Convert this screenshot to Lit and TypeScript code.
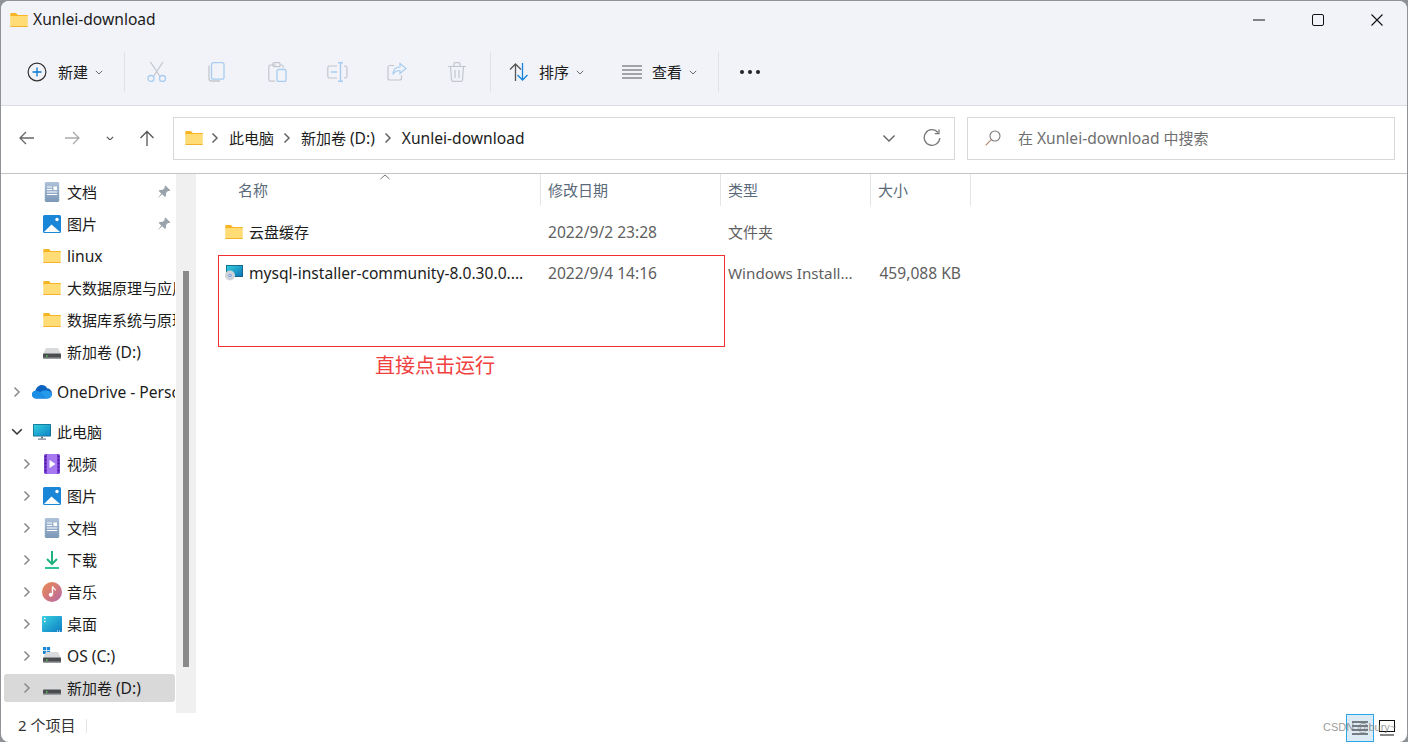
import { LitElement, html, css, svg } from "lit";
import { customElement } from "lit/decorators.js";

const folder = (w = 18) => html`<svg width=${w} height=${Math.round(w * 0.8)} viewBox="0 0 18 14.4"><path d="M0 1.2C0 .5.5 0 1.2 0h4.6l2 2H18v2H0z" fill="#f9b425"/><path d="M0 3h18v10.4c0 .6-.4 1-1 1H1c-.6 0-1-.4-1-1z" fill="#ffdc75"/><path d="M0 13.4h18v.2c0 .5-.4.8-1 .8H1c-.6 0-1-.3-1-.8z" fill="#f2b12f"/></svg>`;
const chev = (c = "#8a8a8a") => html`<svg width="8" height="12" viewBox="0 0 8 12"><path d="M1.5 1.5 6 6l-4.5 4.5" fill="none" stroke=${c} stroke-width="1.5"/></svg>`;
const chevDown = (w = 10, c = "#5c5c5c", sw = 1.1) => html`<svg width=${w} height=${w * 0.6} viewBox="0 0 10 6"><path d="M1 1l4 4 4-4" fill="none" stroke=${c} stroke-width=${sw}/></svg>`;
const docIcon = html`<svg width="16" height="20" viewBox="0 0 16 20"><defs><linearGradient id="dg" x1="0" y1="0" x2="0" y2="1"><stop offset="0" stop-color="#adc2d8"/><stop offset="1" stop-color="#7c98b8"/></linearGradient></defs><rect x=".8" y="0" width="14.4" height="20" rx="1.6" fill="url(#dg)"/><path d="M3 5h5M3 7.500h5M3 10h10M3 12.500h10" stroke="#fff" stroke-width="1"/><rect x="9.500" y="4.500" width="3.500" height="3.500" fill="#fff"/></svg>`;
const picIcon = html`<svg width="18" height="18" viewBox="0 0 18 18"><rect width="18" height="18" rx="1.500" fill="#1a86d8"/><circle cx="14" cy="4.500" r="1.700" fill="#fff"/><path d="M1 17l7.500-7.500L17 17z" fill="#fff"/></svg>`;
const drive = (win = false) => html`<svg width="18" height="18" viewBox="0 0 18 18">${win ? svg`<path d="M0 0h3.200v3.200H0zM3.900 0h3.200v3.200H3.900zM0 3.900h3.200v3.200H0zM3.900 3.900h3.200v3.200H3.900z" fill="#1a86d8"/>` : ""}<path d="M3 5h12l3 6H0z" fill="#d8dadc"/><rect y="10.500" width="18" height="5" rx=".8" fill="#4a4d50"/><rect y="14.500" width="18" height="1.500" fill="#9a9c9e"/><rect x="3" y="12.300" width="1.500" height="1.300" fill="#55e05a"/></svg>`;
const pin = html`<svg width="14" height="14" viewBox="0 0 14 14"><path d="M8.500.5l5 5-1.300.6-1.300-.2-2 2.400.2 2.400-1.200 1.200-2.600-2.700L1 13 .9 12.900l3.400-4.300L1.700 6l1.200-1.200 2.400.2 2.400-2-.2-1.300z" fill="#9aa3ab"/></svg>`;
const cloud = html`<svg width="20" height="14" viewBox="0 0 20 14"><path d="M4.500 13.500C1.500 13.500 0 11.500 0 9.500c0-2 1.500-3.600 3.400-3.800C4.200 2.500 6.800 0 9.800 0c2.300 0 4.200 1.200 5.300 3.200 2.700.2 4.900 2.500 4.900 5.300 0 2.800-2.200 5-5 5z" fill="#0c64c0"/><path d="M4.500 13.500C1.500 13.500 0 11.500 0 9.500c0-2.200 2-4 4.500-3.700 1.500 0 2.800.8 3.800 1.800l6.500 5.900z" fill="#1b8fe6"/><path d="M8 7.500c1.500-1.500 3.500-2.300 5-1.800 1-.3 2-.3 3 0 2.400.5 4 2 4 4 0 2.300-2.200 3.800-4.500 3.800H14.800z" fill="#2a9ff0" opacity=".9"/></svg>`;
const pc = html`<svg width="18" height="16" viewBox="0 0 18 16"><defs><linearGradient id="pg" x1="0" y1="0" x2="1" y2="1"><stop offset="0" stop-color="#32cfdc"/><stop offset="1" stop-color="#0d84c8"/></linearGradient></defs><rect width="18" height="12.500" rx=".8" fill="#0f6d8e"/><rect x=".8" y=".8" width="16.400" height="10.900" fill="url(#pg)"/><rect x="8" y="12.500" width="2" height="2" fill="#6d7d88"/><rect x="5" y="14.500" width="8" height="1.200" fill="#6d7d88"/></svg>`;
const video = html`<svg width="16" height="20" viewBox="0 0 16 20"><rect width="16" height="20" rx="1.800" fill="#7a3dd8"/><rect x="3" width="10" height="20" fill="#a779f0"/><path d="M5.500 6l6 4-6 4z" fill="#fff"/><path d="M.8 2.500h1.400M.8 6h1.400M.8 9.500h1.400M.8 13h1.400M.8 16.500h1.400M13.800 2.500h1.400M13.800 6h1.400M13.800 9.500h1.400M13.800 13h1.400M13.800 16.500h1.400" stroke="#3e1a80" stroke-width="1.500"/></svg>`;
const dl = html`<svg width="14" height="18" viewBox="0 0 14 18"><path d="M7 0v12.500M2 8l5 5 5-5" fill="none" stroke="#21b07e" stroke-width="2"/><rect y="16" width="14" height="2" fill="#2fc19a"/></svg>`;
const music = html`<svg width="20" height="20" viewBox="0 0 20 20"><defs><linearGradient id="mg" x1="0" y1="0" x2="1" y2="1"><stop offset="0" stop-color="#ee8a4e"/><stop offset="1" stop-color="#b568a8"/></linearGradient></defs><circle cx="10" cy="10" r="10" fill="url(#mg)"/><path d="M10.500 4.500v7.800" stroke="#fff" stroke-width="1.400"/><path d="M10.500 4.500c.5 2 3 2 3 4" fill="none" stroke="#fff" stroke-width="1.200"/><circle cx="8.800" cy="12.800" r="2" fill="#fff"/></svg>`;
const desk = html`<svg width="20" height="16" viewBox="0 0 20 16"><defs><linearGradient id="kg" x1="0" y1="0" x2="1" y2="1"><stop offset="0" stop-color="#38d0e0"/><stop offset="1" stop-color="#0d7cc4"/></linearGradient></defs><rect width="20" height="16" rx="1" fill="url(#kg)"/><path d="M2 2.500h1.500M2 5.500h1.500" stroke="#fff" stroke-width="1.500"/><path d="M15 15h1M17 15h1" stroke="#fff"/></svg>`;

const installer = html`<svg width="18" height="16" viewBox="0 0 18 16"><defs><linearGradient id="ig" x1="0" y1="0" x2="1" y2="1"><stop offset="0" stop-color="#32cfdc"/><stop offset="1" stop-color="#0d74b8"/></linearGradient></defs><rect x="1" y="0" width="17" height="12" fill="#0f5f80"/><rect x="1.800" y=".8" width="15.400" height="10.400" fill="url(#ig)"/><circle cx="5" cy="10.500" r="5" fill="#d0d4d9"/><circle cx="5" cy="10.500" r="1.800" fill="#7fa8e0"/><circle cx="5" cy="10.500" r=".6" fill="#fff"/></svg>`;

const L = (s: string) => html`<span class="l">${s}</span>`;

type Row = { t: unknown; i: unknown; lvl: number; c?: "r" | "d"; pin?: boolean; sel?: boolean; gap?: boolean };
const dDrive = html`新加卷 ${L("(D:)")}`;
const rows: Row[] = [
  { t: "文档", i: docIcon, lvl: 1, pin: true },
  { t: "图片", i: picIcon, lvl: 1, pin: true },
  { t: L("linux"), i: folder(), lvl: 1 },
  { t: "大数据原理与应用", i: folder(), lvl: 1 },
  { t: "数据库系统与原理", i: folder(), lvl: 1 },
  { t: dDrive, i: drive(), lvl: 1 },
  { t: L("OneDrive - Personal"), i: cloud, lvl: 0, c: "r", gap: true },
  { t: "此电脑", i: pc, lvl: 0, c: "d", gap: true },
  { t: "视频", i: video, lvl: 1, c: "r" },
  { t: "图片", i: picIcon, lvl: 1, c: "r" },
  { t: "文档", i: docIcon, lvl: 1, c: "r" },
  { t: "下载", i: dl, lvl: 1, c: "r" },
  { t: "音乐", i: music, lvl: 1, c: "r" },
  { t: "桌面", i: desk, lvl: 1, c: "r" },
  { t: L("OS (C:)"), i: drive(true), lvl: 1, c: "r" },
  { t: dDrive, i: drive(), lvl: 1, c: "r", sel: true },
];

const tools = [
  html`<svg width="20" height="20" viewBox="0 0 20 20" fill="none"><path d="M3.500 0l9.500 14.500M16 0L6.500 14.500" stroke="#c3c6cc" stroke-width="1.200"/><circle cx="4" cy="16.500" r="3" stroke="#a8cdf0" stroke-width="1.300"/><circle cx="15.500" cy="16.500" r="3" stroke="#a8cdf0" stroke-width="1.300"/></svg>`,
  html`<svg width="18" height="20" viewBox="0 0 18 20" fill="none"><path d="M1 3.500v13c0 1.500 1 2.500 2.500 2.500H12" stroke="#c3c6cc" stroke-width="1.300"/><rect x="3.500" y=".7" width="12.500" height="16.500" rx="2" stroke="#a8cdf0" stroke-width="1.300"/></svg>`,
  html`<svg width="19" height="20" viewBox="0 0 19 20" fill="none"><path d="M8 3H2.500C1.500 3 .8 3.700.8 4.700v12.800c0 1 .7 1.700 1.700 1.700H7M12 3h1.500c1 0 1.700.7 1.700 1.700V6" stroke="#c3c6cc" stroke-width="1.200"/><rect x="5" y=".7" width="7" height="4" rx="1" stroke="#c3c6cc" stroke-width="1.200"/><rect x="9" y="7.500" width="9" height="12" rx="1.500" stroke="#a8cdf0" stroke-width="1.300"/></svg>`,
  html`<svg width="21" height="20" viewBox="0 0 21 20" fill="none"><path d="M10 4H2.500C1.500 4 .8 4.700.8 5.700v8.600c0 1 .7 1.700 1.700 1.700H10M17 4h1.300c1 0 1.700.7 1.700 1.700v8.600c0 1-.7 1.700-1.700 1.700H17" stroke="#c3c6cc" stroke-width="1.200"/><path d="M13.500.7v18.600M11 .7h5M11 19.300h5M4 10h6" stroke="#a8cdf0" stroke-width="1.400"/></svg>`,
  html`<svg width="20" height="20" viewBox="0 0 20 20" fill="none"><path d="M7 3.500H3C1.800 3.500 1 4.300 1 5.500V16c0 1.200.8 2 2 2h9.500c1.200 0 2-.8 2-2v-2.500" stroke="#c3c6cc" stroke-width="1.200"/><path d="M13 1.500l6 5-6 5V8.500c-3.500 0-5.500 1-7 4 0-5 2.500-7.500 7-7.500z" stroke="#a8cdf0" stroke-width="1.200"/></svg>`,
  html`<svg width="18" height="20" viewBox="0 0 18 20" fill="none" stroke="#c3c6cc" stroke-width="1.200"><path d="M0 4.500h18M6 4.500V2c0-.8.6-1.300 1.300-1.300h3.400c.7 0 1.300.5 1.300 1.300v2.500M2.500 4.500l1 13.500c.1.800.6 1.300 1.300 1.300h8.400c.7 0 1.200-.5 1.300-1.300l1-13.500M7 8v8M11 8v8"/></svg>`,
];

@customElement("app-root")
export class AppRoot extends LitElement {
  static styles = css`
    :host { display: block; width: 1408px; height: 742px; background: #8f9296; overflow: hidden; position: relative;
      font-family: "Noto Sans", "Noto Sans CJK SC", sans-serif; font-size: 15px; color: #1c1c1c; }
    .l { font-size: 15.6px; }
    .l2 { font-size: 15.2px; }
    .win { margin: 1px 1px 0 1px; height: 741px; border-radius: 8px; overflow: hidden; background: #fff; display: flex; flex-direction: column; position: relative; }
    .title { height: 38px; background: #f1f3f9; display: flex; align-items: center; padding-left: 9px; padding-right: 1px; flex: none; }
    .title .name { margin-left: 5px; flex: 1; line-height: 36px; height: 38px; }
    .wb { width: 59px; height: 36px; display: flex; align-items: center; justify-content: center; }
    .toolbar { height: 66px; background: #f1f3f9; border-bottom: 1px solid #dcdee3; display: flex; align-items: center; flex: none; padding-left: 26px; }
    .sep { width: 1px; height: 40px; background: #e0e2e7; flex: none; }
    .tbtn { display: flex; align-items: center; flex: none; }
    .tbtn .lbl { margin-left: 10px; margin-right: 7px; line-height: 18px; }
    .new { width: 97px; }
    .new .lbl { margin-left: 11px; margin-right: 7px; }
    .tool { width: 60px; height: 40px; display: flex; align-items: center; justify-content: center; flex: none; }
    .tools { display: flex; margin-left: 2px; margin-right: 3px; }
    .sort { margin-left: 18px; width: 113px; }
    .view { width: 96px; }
    .more { margin-left: 21px; display: flex; gap: 4px; }
    .more i { width: 4px; height: 4px; border-radius: 50%; background: #222; display: block; }
    .addr { height: 68px; display: flex; align-items: center; flex: none; border-bottom: 1px solid #c4c4c4; box-sizing: border-box; padding-bottom: 3px; }
    .nav { width: 172px; display: flex; align-items: center; flex: none; height: 20px; }
    .nav span { display: flex; justify-content: center; align-items: center; flex: none; }
    .box { height: 43px; border: 1px solid #d8d8d8; box-sizing: border-box; display: flex; align-items: center; background: #fff; flex: none; }
    .box > span { line-height: 20px; margin-top: -1px; }
    .path { width: 782px; padding-left: 11px; }
    .crumb { margin-left: 9px; margin-right: 10px; display: flex; margin-top: 0 !important; }
    .crumb.first { margin-left: 8px; }
    .spacer { flex: 1; }
    .search { width: 428px; margin-left: 12px; padding-left: 17px; color: #6f6f6f; }
    .search .txt { margin-left: 17px; }
    .main { flex: 1; display: flex; min-height: 0; }
    .side { width: 174px; overflow: hidden; flex: none; padding-top: 2px; display: flex; flex-direction: column; white-space: nowrap; }
    .row { height: 28px; margin: 2px 0 2px 3px; flex: none; display: flex; align-items: center; border-radius: 3px; padding-right: 4px; }
    .row.sel { background: #d9d9d9; }
    .row.gap { margin-top: 10px; }
    .cjk { padding-bottom: 2px; }
    .ch { width: 18px; display: flex; justify-content: center; align-items: center; flex: none; }
    .ic { width: 20px; margin-left: 6px; margin-right: 5px; display: flex; justify-content: center; align-items: center; flex: none; }
    .pin { margin-left: auto; display: flex; }
    .gutter { width: 20px; height: 100%; background: #f0f0f0; flex: none; margin-left: 1px; padding: 97px 7px 0; box-sizing: border-box; }
    .thumb { width: 6px; height: 396px; background: #8a8a8a; }
    .content { flex: 1; position: relative; }
    .hdr { display: flex; height: 32px; align-items: center; color: #5a6a7a; }
    .hc { box-sizing: border-box; height: 32px; display: flex; align-items: center; border-right: 1px solid #e5e5e5; padding-left: 7px; padding-bottom: 2px; flex: none; }
    .c1 { width: 345px; }
    .c2 { width: 180px; }
    .c3 { width: 150px; }
    .c4 { width: 100px; }
    .hc.c1 { padding-left: 42px; }
    .list { padding-top: 6px; }
    .fr { display: flex; height: 41px; box-sizing: border-box; padding-bottom: 2px; align-items: center; color: #5f5f5f; }
    .fc { box-sizing: border-box; padding-left: 7px; flex: none; white-space: nowrap; }
    .fc.c1 { padding-left: 28px; display: flex; align-items: center; color: #1c1c1c; }
    .fc.c1 .fi { width: 20px; margin-right: 5px; display: flex; justify-content: center; }
    .fc.c4 { text-align: right; padding-right: 10px; padding-left: 0; }
    .caret { position: absolute; left: 184px; top: 0; }
    .status { height: 29px; flex: none; display: flex; align-items: center; padding-left: 17px; color: #333; position: relative; }
    .status .n { padding-bottom: 6px; }
    .status .s { width: 1px; height: 14px; background: #e5e5e5; margin-left: 11px; margin-bottom: 3px; }
    .vw { margin-left: auto; display: flex; align-items: center; margin-right: 12px; gap: 5px; }
    .vb { width: 28px; height: 28px; box-sizing: border-box; border: 1px solid #2aa7e6; background: #dceaf4; display: flex; align-items: center; justify-content: center; }
    .vb2 { width: 16px; height: 16px; display: flex; }
    .redbox { position: absolute; left: 217px; top: 254px; width: 507px; height: 92px; box-sizing: border-box; border: 1px solid #f03030; }
    .note { position: absolute; left: 374px; top: 351px; color: #f04040; font-size: 20px; white-space: nowrap; line-height: 28px; }
    .wm { position: absolute; left: 1322px; top: 717px; color: rgba(120,120,120,.75); font: 11px "Liberation Sans", sans-serif; white-space: nowrap; line-height: 18px; }
  `;

  render() {
    return html`<div class="win">
      <div class="title">
        ${folder(18)}<span class="name l">Xunlei-download</span>
        <span class="wb"><svg width="12" height="2"><path d="M0 1h12" stroke="#111" stroke-width="1"/></svg></span>
        <span class="wb"><svg width="12" height="12"><rect x=".5" y=".5" width="11" height="11" rx="1.500" fill="none" stroke="#111"/></svg></span>
        <span class="wb"><svg width="12" height="12"><path d="M.5.5l11 11M11.500.5l-11 11" stroke="#111" stroke-width="1.100"/></svg></span>
      </div>
      <div class="toolbar">
        <div class="tbtn new">
          <svg width="20" height="20" viewBox="0 0 20 20" fill="none"><circle cx="10" cy="10" r="8.900" stroke="#333" stroke-width="1.200"/><path d="M10 5.500v9M5.500 10h9" stroke="#0a78d0" stroke-width="1.300"/></svg>
          <span class="lbl">新建</span>${chevDown(8, "#555")}
        </div>
        <div class="sep"></div>
        <div class="tools">${tools.map((t) => html`<div class="tool">${t}</div>`)}</div>
        <div class="sep"></div>
        <div class="tbtn sort">
          <svg width="20" height="20" viewBox="0 0 20 20" fill="none"><path d="M6.500 19V2M1 7.500L6.500 2 12 7.500" stroke="#555" stroke-width="1.300"/><path d="M13.500 1v17M8.500 13l5 5 5-5" stroke="#1484e0" stroke-width="1.300"/></svg>
          <span class="lbl">排序</span>${chevDown(8, "#555")}
        </div>
        <div class="tbtn view">
          <svg width="20" height="14" viewBox="0 0 20 14"><path d="M0 1h20M0 5h20M0 9h20M0 13h20" stroke="#555" stroke-width="1.100"/></svg>
          <span class="lbl">查看</span>${chevDown(8, "#555")}
        </div>
        <div class="sep"></div>
        <div class="more"><i></i><i></i><i></i></div>
      </div>
      <div class="addr">
        <div class="nav">
          <span style="width:52px"><svg width="16" height="14" viewBox="0 0 16 14" fill="none"><path d="M15 7H1.500M7 1L1 7l6 6" stroke="#666" stroke-width="1.300"/></svg></span>
          <span style="width:38px"><svg width="16" height="14" viewBox="0 0 16 14" fill="none"><path d="M1 7h13.500M9 1l6 6-6 6" stroke="#aaa" stroke-width="1.300"/></svg></span>
          <span style="width:38px">${chevDown(8, "#555", 1.4)}</span>
          <span style="width:36px"><svg width="16" height="16" viewBox="0 0 16 16" fill="none"><path d="M8 16V1.500M1.500 8L8 1.500 14.500 8" stroke="#555" stroke-width="1.300"/></svg></span>
        </div>
        <div class="box path">
          ${folder(18)}
          <span class="crumb first">${chev("#666")}</span><span>此电脑</span>
          <span class="crumb">${chev("#666")}</span><span>${dDrive}</span>
          <span class="crumb">${chev("#666")}</span><span class="l">Xunlei-download</span>
          <span class="spacer"></span>
          ${chevDown(14, "#666", 1)}
          <svg style="margin:0 13px 0 27px" width="18" height="18" viewBox="0 0 18 18" fill="none"><path d="M15 3.500A7.800 7.800 0 1 0 16.800 9" stroke="#777" stroke-width="1.300"/><path d="M16 .5v4.200h-4.200" stroke="#777" stroke-width="1.300"/></svg>
        </div>
        <div class="box search">
          <svg width="16" height="16" viewBox="0 0 16 16" fill="none"><circle cx="10" cy="6" r="5" stroke="#777" stroke-width="1.100"/><path d="M6.300 9.700L.7 15.300" stroke="#b08a70" stroke-width="1.200"/></svg>
          <span class="txt">在 ${L("Xunlei-download")} 中搜索</span>
        </div>
      </div>
      <div class="main">
        <div class="side">
          ${rows.map((r) => html`<div class="row ${r.sel ? "sel" : ""} ${r.gap ? "gap" : ""}" style="padding-left:${4 + r.lvl * 10}px">
            <span class="ch">${r.c === "r" ? chev() : r.c === "d" ? chevDown(12, "#333", 1.3) : ""}</span>
            <span class="ic">${r.i}</span>
            <span class=${typeof r.t === "string" ? "cjk" : ""}>${r.t}</span>
            ${r.pin ? html`<span class="pin">${pin}</span>` : ""}
          </div>`)}
        </div>
        <div class="gutter"><div class="thumb"></div></div>
        <div class="content">
          <svg class="caret" width="10" height="6" viewBox="0 0 10 6"><path d="M.5 5L5 1l4.500 4" fill="none" stroke="#777"/></svg>
          <div class="hdr">
            <div class="hc c1">名称</div><div class="hc c2">修改日期</div><div class="hc c3">类型</div><div class="hc c4">大小</div>
          </div>
          <div class="list">
            <div class="fr"><div class="fc c1"><span class="fi">${folder(18)}</span>云盘缓存</div><div class="fc c2 l">2022/9/2 23:28</div><div class="fc c3">文件夹</div><div class="fc c4"></div></div>
            <div class="fr"><div class="fc c1"><span class="fi">${installer}</span><span class="l">mysql-installer-community-8.0.30.0....</span></div><div class="fc c2 l">2022/9/4 14:16</div><div class="fc c3 l2">Windows Install...</div><div class="fc c4 l">459,088 KB</div></div>
          </div>
        </div>
      </div>
      <div class="status">
        <span class="n">2 个项目</span><span class="s"></span>
        <div class="vw">
          <div class="vb"><svg width="16" height="14" viewBox="0 0 16 14"><path d="M0 1h16M0 5h16M0 9h16M0 13h16" stroke="#111" stroke-width="1"/></svg></div>
          <div class="vb2"><svg width="16" height="16" viewBox="0 0 16 16" fill="none"><rect x=".5" y=".5" width="15" height="11" stroke="#111"/><path d="M1 15h14" stroke="#111"/></svg></div>
        </div>
      </div>
      <div class="redbox"></div>
      <div class="note">直接点击运行</div>
      <div class="wm">CSDN @bury~</div>
    </div>`;
  }
}
